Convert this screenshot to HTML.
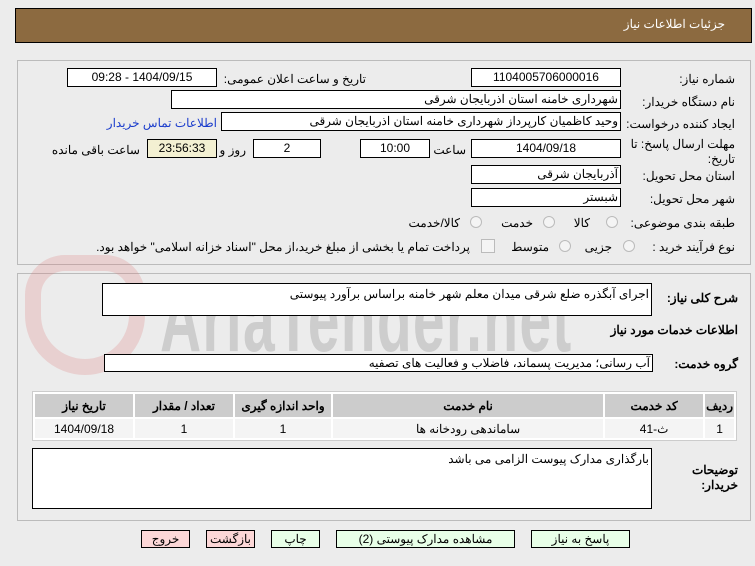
<!DOCTYPE html>
<html><head><meta charset="utf-8"><style>
body{margin:0;width:755px;height:566px;background:#ececec;font-family:Tahoma,"Liberation Sans","Noto Sans CJK SC",sans-serif;font-size:12px;color:#000;position:relative;overflow:hidden}
.a{position:absolute}
.f{position:absolute;background:#fff;border:1px solid #000;box-sizing:border-box;height:19px;line-height:17px;text-align:center;font-size:12px;direction:rtl}
.l{position:absolute;direction:rtl;white-space:nowrap;font-size:12px}
.b{position:absolute;top:530px;height:18px;border:1px solid #000;box-sizing:border-box;text-align:center;line-height:16px;font-size:12px;background:#e8ffe8}
.r{position:absolute;width:12px;height:12px;border:1px solid #bbb;border-radius:50%;background:#f4f4f4;box-sizing:border-box}
th,td{font-size:12px;text-align:center}
</style></head><body>
<div class="a" style="left:15px;top:8px;width:737px;height:35px;background:#8c6a40;border:1px solid #000;box-sizing:border-box"></div>
<div class="l" style="right:30px;top:17px;color:#fff">جزئیات اطلاعات نیاز</div>
<div class="a" style="left:17px;top:60px;width:734px;height:205px;border:1px solid #bbb;box-sizing:border-box"></div>
<div class="a" style="left:17px;top:273px;width:734px;height:248px;border:1px solid #bbb;box-sizing:border-box"></div>
<div class="a" style="left:160px;top:268px;font-size:92px;color:rgba(150,150,150,0.35);font-weight:bold;font-family:'Liberation Sans',sans-serif;letter-spacing:2px;transform:scaleX(0.62);transform-origin:left top;white-space:nowrap">AriaTender.net</div>
<div class="a" style="left:25px;top:255px;width:120px;height:120px;border:16px solid rgba(220,110,110,0.22);border-radius:40px 40px 60px 60px;box-sizing:border-box"></div>

<div class="l" style="right:20px;top:72px">شماره نیاز:</div>
<div class="f" style="left:471px;top:68px;width:150px">1104005706000016</div>
<div class="l" style="right:389px;top:72px">تاریخ و ساعت اعلان عمومی:</div>
<div class="f" style="left:67px;top:68px;width:150px">1404/09/15 - 09:28</div>
<div class="l" style="right:20px;top:95px">نام دستگاه خریدار:</div>
<div class="f" style="left:171px;top:90px;width:450px;text-align:right;padding-right:2px">شهرداری خامنه استان اذربایجان شرقی</div>
<div class="l" style="right:20px;top:117px">ایجاد کننده درخواست:</div>
<div class="f" style="left:221px;top:112px;width:400px;text-align:right;padding-right:2px">وحید کاظمیان کارپرداز شهرداری خامنه استان اذربایجان شرقی</div>
<div class="l" style="right:538px;top:116px;color:#1a3ccc">اطلاعات تماس خریدار</div>
<div class="l" style="right:20px;top:137px;text-align:right;line-height:15px">مهلت ارسال پاسخ: تا<br>تاریخ:</div>
<div class="f" style="left:471px;top:139px;width:150px">1404/09/18</div>
<div class="l" style="right:289px;top:143px">ساعت</div>
<div class="f" style="left:360px;top:139px;width:70px">10:00</div>
<div class="f" style="left:253px;top:139px;width:68px">2</div>
<div class="l" style="right:509px;top:143px">روز و</div>
<div class="f" style="left:147px;top:139px;width:70px;background:#f3f0d2">23:56:33</div>
<div class="l" style="right:615px;top:143px">ساعت باقی مانده</div>
<div class="l" style="right:20px;top:169px">استان محل تحویل:</div>
<div class="f" style="left:471px;top:165px;width:150px;text-align:right;padding-right:2px">آذربایجان شرقی</div>
<div class="l" style="right:20px;top:192px">شهر محل تحویل:</div>
<div class="f" style="left:471px;top:188px;width:150px;text-align:right;padding-right:2px">شبستر</div>
<div class="l" style="right:20px;top:216px">طبقه بندی موضوعی:</div>
<div class="r" style="left:606px;top:216px"></div><div class="l" style="right:165px;top:216px">کالا</div>
<div class="r" style="left:543px;top:216px"></div><div class="l" style="right:222px;top:216px">خدمت</div>
<div class="r" style="left:470px;top:216px"></div><div class="l" style="right:295px;top:216px">کالا/خدمت</div>
<div class="l" style="right:20px;top:240px">نوع فرآیند خرید :</div>
<div class="r" style="left:623px;top:240px"></div><div class="l" style="right:143px;top:240px">جزیی</div>
<div class="r" style="left:559px;top:240px"></div><div class="l" style="right:206px;top:240px">متوسط</div>
<div class="a" style="left:481px;top:239px;width:12px;height:12px;border:1px solid #bbb;background:#f4f4f4"></div>
<div class="l" style="right:285px;top:240px">پرداخت تمام یا بخشی از مبلغ خرید،از محل "اسناد خزانه اسلامی" خواهد بود.</div>

<div class="l" style="right:17px;top:291px;font-weight:bold">شرح کلی نیاز:</div>
<div class="f" style="left:102px;top:283px;width:550px;height:33px;text-align:right;padding-right:2px;line-height:20px">اجرای آبگذره ضلع شرقی میدان معلم شهر خامنه براساس برآورد پیوستی</div>
<div class="l" style="right:17px;top:323px;font-weight:bold">اطلاعات خدمات مورد نیاز</div>
<div class="l" style="right:17px;top:357px;font-weight:bold">گروه خدمت:</div>
<div class="f" style="left:104px;top:354px;width:549px;height:18px;text-align:right;padding-right:2px;line-height:16px">آب رسانی؛ مدیریت پسماند، فاضلاب و فعالیت های تصفیه</div>
<table class="a" style="left:32px;top:391px;width:705px;height:50px;border:1px solid #ccc;border-spacing:2px;background:#fff;direction:rtl">
<tr style="background:#ccc;height:23px;font-weight:bold"><th style="width:26px">ردیف</th><th style="width:96px">کد خدمت</th><th>نام خدمت</th><th style="width:94px">واحد اندازه گیری</th><th style="width:96px">تعداد / مقدار</th><th style="width:96px">تاریخ نیاز</th></tr>
<tr style="background:#f4f4f4"><td>1</td><td>ث-41</td><td>ساماندهی رودخانه ها</td><td>1</td><td>1</td><td>1404/09/18</td></tr>
</table>
<div class="l" style="right:17px;top:463px;font-weight:bold;line-height:15px;text-align:right">توضیحات<br>خریدار:</div>
<div class="f" style="left:32px;top:448px;width:620px;height:61px;text-align:right;padding-right:2px;line-height:20px">بارگذاری مدارک پیوست الزامی می باشد</div>

<div class="b" style="left:141px;width:49px;background:#fcd7d7">خروج</div>
<div class="b" style="left:206px;width:49px;background:#fcd7d7">بازگشت</div>
<div class="b" style="left:271px;width:49px">چاپ</div>
<div class="b" style="left:336px;width:179px">مشاهده مدارک پیوستی (2)</div>
<div class="b" style="left:531px;width:99px">پاسخ به نیاز</div>
</body></html>
